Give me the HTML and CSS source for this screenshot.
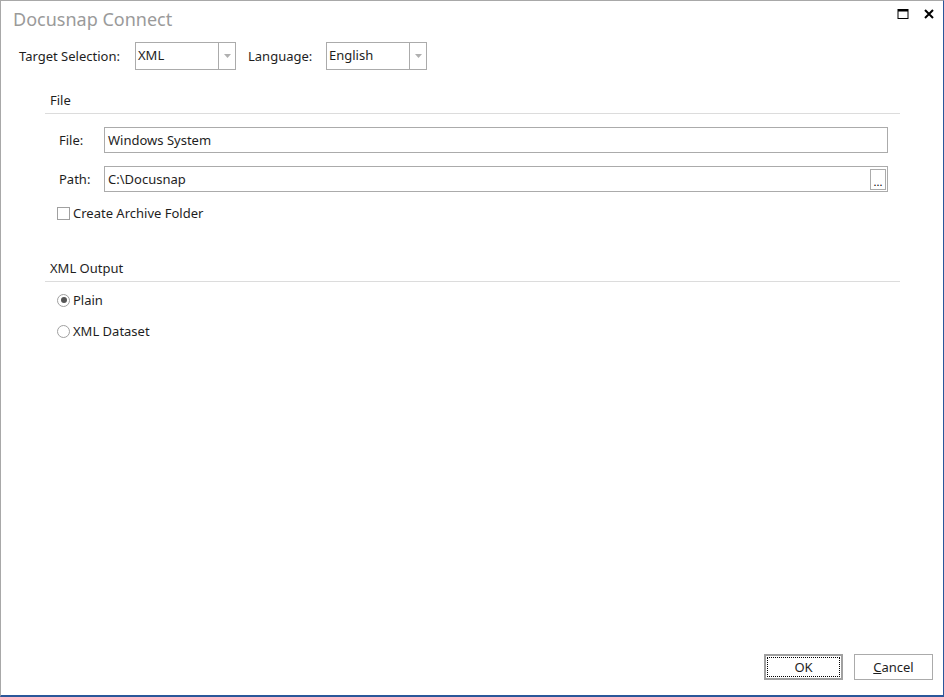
FILE: index.html
```html
<!DOCTYPE html>
<html lang="en">
<head>
    <meta charset="UTF-8">
    <title>Docusnap Connect</title>
    <link rel="stylesheet" href="styles.css">
</head>
<body>
    <div class="window">
        <div class="titlebar">
            <div class="title">Docusnap Connect</div>
            <div class="title-buttons">
                <svg width="12" height="12" viewBox="0 0 12 12"><rect x="1" y="1.5" width="10" height="9" fill="none" stroke="#000" stroke-width="1"/><rect x="1" y="1" width="10" height="2.5" fill="#000"/></svg>
                <svg width="12" height="12" viewBox="0 0 12 12"><path d="M2 2 L10 10 M10 2 L2 10" stroke="#000" stroke-width="2"/></svg>
            </div>
        </div>

        <div class="toolbar">
            <span class="label target-label">Target Selection:</span>
            <div class="combo">
                <span class="combo-text">XML</span>
                <span class="combo-arrow"><svg width="7" height="4" viewBox="0 0 7 4"><path d="M0 0 L7 0 L3.5 4 Z" fill="#b0b0b0"/></svg></span>
            </div>
            <span class="label lang-label">Language:</span>
            <div class="combo">
                <span class="combo-text">English</span>
                <span class="combo-arrow"><svg width="7" height="4" viewBox="0 0 7 4"><path d="M0 0 L7 0 L3.5 4 Z" fill="#b0b0b0"/></svg></span>
            </div>
        </div>

        <div class="content">
            <div class="group">
                <div class="group-header">File</div>
                <div class="group-body">
                    <div class="field-row">
                        <span class="field-label">File:</span>
                        <div class="textbox">Windows System</div>
                    </div>
                    <div class="field-row">
                        <span class="field-label">Path:</span>
                        <div class="textbox">
                            <span class="textbox-value">C:\Docusnap</span>
                            <span class="browse-btn">...</span>
                        </div>
                    </div>
                    <div class="check-row">
                        <span class="checkbox"></span>
                        <span>Create Archive Folder</span>
                    </div>
                </div>
            </div>

            <div class="group">
                <div class="group-header">XML Output</div>
                <div class="group-body radios">
                    <div class="radio-row">
                        <span class="radio checked"></span>
                        <span>Plain</span>
                    </div>
                    <div class="radio-row">
                        <span class="radio"></span>
                        <span>XML Dataset</span>
                    </div>
                </div>
            </div>
        </div>

        <div class="footer">
            <button class="btn btn-default">OK</button>
            <button class="btn"><u>C</u>ancel</button>
        </div>
    </div>
</body>
</html>
```

FILE: styles.css
```css
html, body {
    margin: 0;
    height: 100%;
}

body {
    font-family: "Noto Sans", "Open Sans", sans-serif;
    font-size: 13px;
    color: #1e1e1e;
    background-color: white;
}

.window {
    box-sizing: border-box;
    height: 697px;
    width: 944px;
    border-top: 1px solid #a8a8a8;
    border-left: 1px solid #a8a8a8;
    border-right: 1px solid #2b579a;
    border-bottom: 2px solid #2b579a;
    display: flex;
    flex-direction: column;
}

.titlebar {
    display: flex;
    justify-content: space-between;
    align-items: flex-start;
    height: 36px;
}

.title {
    font-size: 18px;
    color: #9a9a9a;
    padding: 6px 0 0 12px;
}

.title-buttons {
    display: flex;
    gap: 14px;
    padding: 7px 8px 0 0;
}

.toolbar {
    display: flex;
    align-items: center;
    height: 28px;
    margin-top: 5px;
    padding-left: 18px;
}

.target-label {
    width: 116px;
}

.lang-label {
    margin-left: 12px;
    width: 78px;
}

.combo {
    box-sizing: border-box;
    width: 101px;
    height: 28px;
    border: 1px solid #ababab;
    display: flex;
}

.combo-text {
    flex: 1;
    padding: 3px 0 0 2px;
}

.combo-arrow {
    width: 16px;
    border-left: 1px solid #ababab;
    display: flex;
    align-items: center;
    justify-content: center;
}

.content {
    flex: 1;
    padding: 21px 43px 0 44px;
}

.group {
    margin-bottom: 37px;
}

.group-header {
    padding: 0 0 4px 5px;
    border-bottom: 1px solid #dcdcdc;
}

.group-body {
    padding: 13px 12px 0 12px;
}

.field-row {
    display: flex;
    align-items: center;
    margin-bottom: 13px;
}

.field-label {
    width: 45px;
    padding-left: 2px;
}

.textbox {
    box-sizing: border-box;
    flex: 1;
    height: 26px;
    border: 1px solid #ababab;
    padding: 3px 0 0 3px;
    display: flex;
    justify-content: space-between;
}

.browse-btn {
    box-sizing: border-box;
    width: 16px;
    height: 21px;
    margin: -1px 1px 0 0;
    border: 1px solid #ababab;
    font-size: 11px;
    line-height: 24px;
    text-align: center;
    color: #000;
}

.check-row,
.radio-row {
    display: flex;
    align-items: center;
    gap: 3px;
}

.check-row {
    margin-top: -1px;
}

.checkbox {
    box-sizing: border-box;
    width: 13px;
    height: 13px;
    border: 1px solid #a0a0a0;
}

.radios {
    padding-top: 9px;
}

.radio-row {
    margin-bottom: 13px;
}

.radio {
    box-sizing: border-box;
    width: 13px;
    height: 13px;
    border: 1px solid #a0a0a0;
    border-radius: 50%;
    position: relative;
}

.radio.checked::after {
    content: "";
    position: absolute;
    left: 2.5px;
    top: 2.5px;
    width: 6px;
    height: 6px;
    border-radius: 50%;
    background-color: #555;
}

.footer {
    display: flex;
    justify-content: flex-end;
    gap: 11px;
    padding: 0 10px 15px 0;
}

.btn {
    box-sizing: border-box;
    width: 79px;
    height: 26px;
    font-family: inherit;
    font-size: 13px;
    color: #1e1e1e;
    background-color: white;
    border: 1px solid #ababab;
    padding: 0;
}

.btn-default {
    border: 2px solid #a0a0a0;
    outline: 1px dotted #000;
    outline-offset: -4px;
}
```
